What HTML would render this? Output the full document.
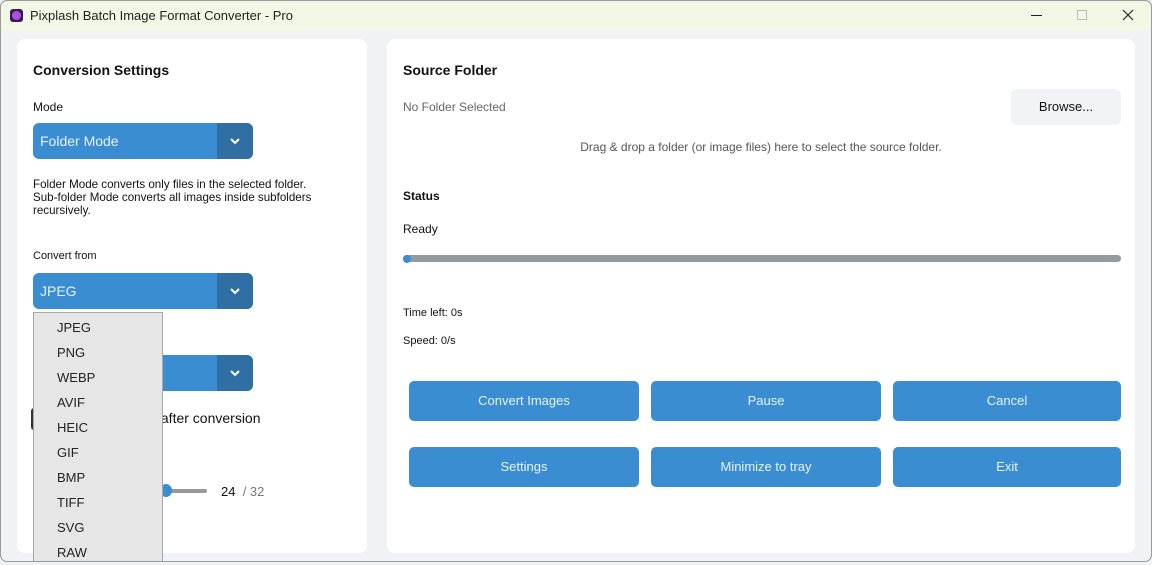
<!DOCTYPE html>
<html><head><meta charset="utf-8"><style>
*{box-sizing:border-box;margin:0;padding:0}
body{width:1152px;height:562px;overflow:hidden;background:#f0f2f5;font-family:"Liberation Sans",sans-serif;position:relative;color:#111}
.abs{position:absolute}
.title{left:0;top:0;width:1152px;height:31px;background:#f3f7e6;border:1px solid #c8cab8;border-bottom:none;border-radius:7px 7px 0 0}
.panel{background:#fff;border-radius:8px}
.b{font-weight:bold}
.sel{background:#3a8dd0;border-radius:6px;color:#e8f2fb;font-size:14px}
.sel .arr{position:absolute;right:0;top:0;width:36px;height:100%;background:#2f6fa3;border-radius:0 6px 6px 0}
.btn{background:#3a8dd0;border-radius:5px;color:#e8f2fb;font-size:13px;text-align:center;line-height:40px;width:230px;height:40px}
.dd div{height:25px;line-height:25px;padding-left:23px;font-size:13px;color:#222}
</style></head><body>
<div class="abs" style="left:0;top:0;width:1152px;height:562px;border:1px solid #9a9a9a;border-radius:7px;z-index:5;pointer-events:none"></div>
<div class="abs title"></div>
<div class="abs" style="left:10px;top:9px;width:13px;height:13px;border-radius:3px;background:#3a1a5a"><div style="margin:2px;width:9px;height:9px;border-radius:50%;background:#a855d8"></div></div>
<div class="abs" style="left:30px;top:8px;font-size:13px;color:#222">Pixplash Batch Image Format Converter - Pro</div>
<div class="abs" style="left:1031px;top:15px;width:11px;height:1px;background:#222"></div>
<div class="abs" style="left:1077px;top:10px;width:10px;height:10px;border:1px solid #bbb"></div>
<svg class="abs" style="left:1122px;top:9px" width="12" height="12"><path d="M1 1L11 11M11 1L1 11" stroke="#222" stroke-width="1.2"/></svg>

<div class="abs panel" style="left:17px;top:39px;width:350px;height:514px"></div>
<div class="abs panel" style="left:387px;top:39px;width:748px;height:514px"></div>

<div class="abs b" style="left:33px;top:62px;font-size:14px">Conversion Settings</div>
<div class="abs" style="left:33px;top:100px;font-size:12px">Mode</div>
<div class="abs sel" style="left:33px;top:123px;width:220px;height:36px;line-height:36px;padding-left:7px">Folder Mode<div class="arr"><svg style="position:absolute;left:13px;top:15px" width="10" height="7"><path d="M1 1L5 5L9 1" stroke="#fff" stroke-width="2" fill="none"/></svg></div></div>
<div class="abs" style="left:33px;top:178px;font-size:11.6px;line-height:13px">Folder Mode converts only files in the selected folder.<br>Sub-folder Mode converts all images inside subfolders<br>recursively.</div>
<div class="abs" style="left:33px;top:250px;font-size:11px">Convert from</div>
<div class="abs sel" style="left:33px;top:273px;width:220px;height:36px;line-height:36px;padding-left:7px">JPEG<div class="arr"><svg style="position:absolute;left:13px;top:15px" width="10" height="7"><path d="M1 1L5 5L9 1" stroke="#fff" stroke-width="2" fill="none"/></svg></div></div>
<div class="abs sel" style="left:33px;top:355px;width:220px;height:36px"><div class="arr"><svg style="position:absolute;left:13px;top:15px" width="10" height="7"><path d="M1 1L5 5L9 1" stroke="#fff" stroke-width="2" fill="none"/></svg></div></div>
<div class="abs" style="left:31px;top:408px;width:6px;height:22px;background:#333;border-radius:3px"></div>
<div class="abs" style="left:150px;top:410px;font-size:14px">s after conversion</div>
<div class="abs" style="left:160px;top:489px;width:47px;height:4px;background:#999;border-radius:2px"></div>
<div class="abs" style="left:160px;top:484px;width:12px;height:13px;background:#3a8dd0;border-radius:50%"></div>
<div class="abs" style="left:221px;top:484px;font-size:13px">24 <span style="color:#777">&nbsp;/ 32</span></div>

<div class="abs dd" style="left:33px;top:312px;width:130px;height:250px;background:#e6e6e6;border:1px solid #a8a8a8;border-bottom:none;padding-top:2px">
<div>JPEG</div><div>PNG</div><div>WEBP</div><div>AVIF</div><div>HEIC</div><div>GIF</div><div>BMP</div><div>TIFF</div><div>SVG</div><div>RAW</div></div>

<div class="abs b" style="left:403px;top:62px;font-size:14px">Source Folder</div>
<div class="abs" style="left:403px;top:100px;font-size:12px;color:#666">No Folder Selected</div>
<div class="abs" style="left:1011px;top:89px;width:110px;height:36px;background:#f2f3f5;border-radius:6px;text-align:center;line-height:36px;font-size:13px">Browse...</div>
<div class="abs" style="left:387px;top:140px;width:748px;text-align:center;font-size:12px;color:#555">Drag &amp; drop a folder (or image files) here to select the source folder.</div>
<div class="abs b" style="left:403px;top:189px;font-size:12px">Status</div>
<div class="abs" style="left:403px;top:222px;font-size:12px">Ready</div>
<div class="abs" style="left:403px;top:255px;width:718px;height:7px;background:#959a9e;border-radius:4px"></div>
<div class="abs" style="left:403px;top:255px;width:8px;height:8px;background:#3a8dd0;border-radius:50%"></div>
<div class="abs" style="left:403px;top:307px;font-size:11px">Time left: 0s</div>
<div class="abs" style="left:403px;top:335px;font-size:11px">Speed: 0/s</div>

<div class="abs btn" style="left:409px;top:381px">Convert Images</div>
<div class="abs btn" style="left:651px;top:381px">Pause</div>
<div class="abs btn" style="left:893px;top:381px;width:228px">Cancel</div>
<div class="abs btn" style="left:409px;top:447px">Settings</div>
<div class="abs btn" style="left:651px;top:447px">Minimize to tray</div>
<div class="abs btn" style="left:893px;top:447px;width:228px">Exit</div>
</body></html>
